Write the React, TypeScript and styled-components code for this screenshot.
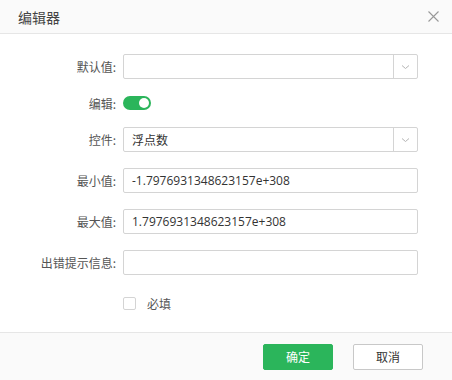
import React, { useState } from 'react'
import styled, { createGlobalStyle } from 'styled-components'

const colors = {
  green: '#2bb55b',
  border: '#d4d4d4',
  text: '#333',
  label: '#555',
  bar: '#fafafa',
  line: '#e6e6e6',
}

const GlobalStyle = createGlobalStyle`
  html, body {
    margin: 0;
    padding: 0;
    background: #fff;
  }
  body {
    font-family: 'Noto Sans CJK SC', 'Open Sans', sans-serif;
    font-size: 12px;
    color: ${colors.text};
  }
`

const Dialog = styled.div`
  width: 452px;
  height: 380px;
  display: flex;
  flex-direction: column;
  background: #fff;
`

const Header = styled.div`
  height: 33px;
  flex: none;
  display: flex;
  align-items: center;
  justify-content: space-between;
  padding: 0 12px 0 18px;
  background: ${colors.bar};
  border-bottom: 1px solid ${colors.line};
`

const Title = styled.div`
  font-size: 14px;
  color: #444;
`

const Close = styled.button`
  width: 12px;
  height: 12px;
  padding: 0;
  border: none;
  background: none;
  display: flex;
  cursor: pointer;
`

const Body = styled.div`
  flex: 1;
  padding: 20px 34px 0 0;
  display: flex;
  flex-direction: column;
`

const Row = styled.div<{ h?: number; mb?: number }>`
  display: flex;
  align-items: center;
  height: ${(p) => p.h || 25}px;
  margin-bottom: ${(p) => (p.mb === undefined ? 16 : p.mb)}px;
`

const Label = styled.div`
  width: 116px;
  flex: none;
  text-align: right;
  padding-right: 7px;
  color: ${colors.label};
  font-size: 12px;
`

const Field = styled.div`
  flex: 1;
  height: 25px;
  box-sizing: border-box;
  border: 1px solid ${colors.border};
  border-radius: 2px;
  display: flex;
  align-items: center;
  background: #fff;
`

const FieldText = styled.div`
  flex: 1;
  padding: 0 8px;
  font-family: 'Open Sans', 'Noto Sans CJK SC', sans-serif;
  font-size: 12px;
  color: ${colors.text};
`

const Arrow = styled.div`
  width: 23px;
  height: 100%;
  border-left: 1px solid ${colors.border};
  display: flex;
  align-items: center;
  justify-content: center;
`

const Switch = styled.button<{ on: boolean }>`
  width: 28px;
  height: 14px;
  padding: 0;
  border: none;
  border-radius: 7px;
  background: ${(p) => (p.on ? colors.green : '#ccc')};
  position: relative;
  cursor: pointer;
  &::after {
    content: '';
    position: absolute;
    top: 2px;
    left: ${(p) => (p.on ? 16 : 2)}px;
    width: 10px;
    height: 10px;
    border-radius: 50%;
    background: #fff;
  }
`

const Check = styled.span`
  width: 13px;
  height: 13px;
  box-sizing: border-box;
  border: 1px solid ${colors.border};
  border-radius: 2px;
  margin-right: 11px;
  background: #fff;
`

const CheckLabel = styled.span`
  color: ${colors.label};
  font-size: 12px;
`

const Footer = styled.div`
  height: 47px;
  flex: none;
  display: flex;
  align-items: center;
  justify-content: flex-end;
  gap: 20px;
  padding: 0 29px 0 0;
  background: ${colors.bar};
  border-top: 1px solid ${colors.line};
`

const Button = styled.button<{ primary?: boolean }>`
  width: 70px;
  height: 26px;
  box-sizing: border-box;
  border-radius: 2px;
  font-family: inherit;
  font-size: 12px;
  cursor: pointer;
  border: 1px solid ${(p) => (p.primary ? colors.green : '#c8c8c8')};
  background: ${(p) => (p.primary ? colors.green : '#fff')};
  color: ${(p) => (p.primary ? '#fff' : colors.text)};
`

const Chevron = () => (
  <svg width="9" height="6" viewBox="0 0 9 6">
    <path d="M1 1.5 L4.5 4.5 L8 1.5" fill="none" stroke="#b5b5b5" strokeWidth="1" />
  </svg>
)

const App: React.FunctionComponent = () => {
  const [editable, setEditable] = useState(true)
  return (
    <Dialog>
      <GlobalStyle />
      <Header>
        <Title>编辑器</Title>
        <Close>
          <svg width="11" height="11" viewBox="0 0 11 11">
            <path d="M0.5 0.5 L10.5 10.5 M10.5 0.5 L0.5 10.5" stroke="#999" strokeWidth="1.1" />
          </svg>
        </Close>
      </Header>
      <Body>
        <Row>
          <Label>默认值:</Label>
          <Field>
            <FieldText />
            <Arrow>
              <Chevron />
            </Arrow>
          </Field>
        </Row>
        <Row h={16} mb={16}>
          <Label>编辑:</Label>
          <Switch on={editable} onClick={() => setEditable(!editable)} />
        </Row>
        <Row>
          <Label>控件:</Label>
          <Field>
            <FieldText>浮点数</FieldText>
            <Arrow>
              <Chevron />
            </Arrow>
          </Field>
        </Row>
        <Row>
          <Label>最小值:</Label>
          <Field>
            <FieldText>-1.7976931348623157e+308</FieldText>
          </Field>
        </Row>
        <Row>
          <Label>最大值:</Label>
          <Field>
            <FieldText>1.7976931348623157e+308</FieldText>
          </Field>
        </Row>
        <Row mb={18}>
          <Label>出错提示信息:</Label>
          <Field>
            <FieldText />
          </Field>
        </Row>
        <Row h={20} mb={0}>
          <Label />
          <Check />
          <CheckLabel>必填</CheckLabel>
        </Row>
      </Body>
      <Footer>
        <Button primary>确定</Button>
        <Button>取消</Button>
      </Footer>
    </Dialog>
  )
}

export default App
